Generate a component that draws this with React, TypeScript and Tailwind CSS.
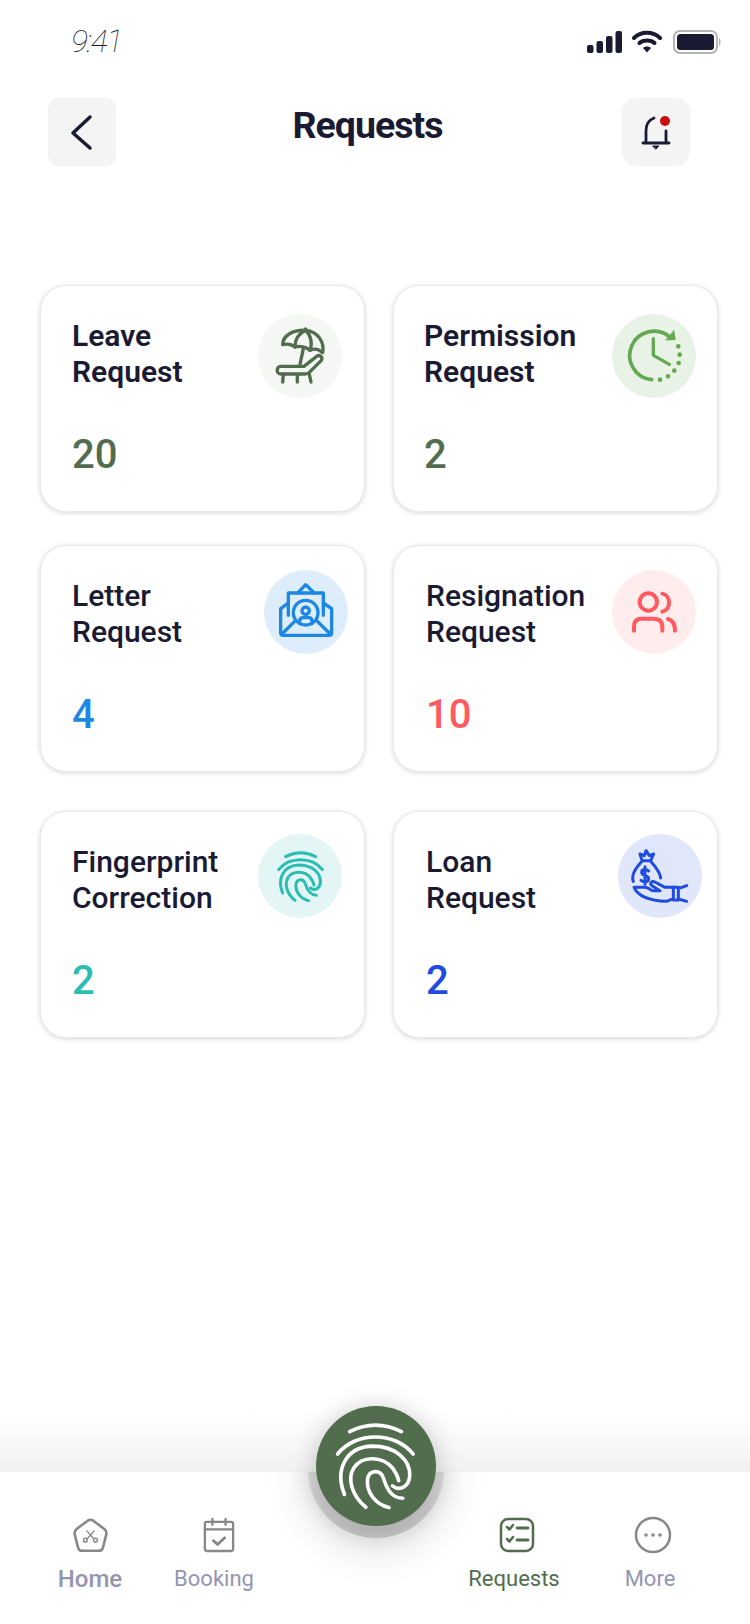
import type { ReactNode } from "react";

function FingerprintIcon({ className, strokeWidth }: { className: string; strokeWidth: number }) {
  return (
    <svg viewBox="100 85 240 255" className={className} fill="none" stroke="currentColor" strokeWidth={strokeWidth} strokeLinecap="round" strokeLinejoin="round">
      <path d="M148 113 Q223 75 298 113" />
      <path d="M113 178 C165 112 280 112 332 178" />
      <path d="M133 295 C105 225 135 157 215 155 C280 155 325 195 322 242 C320 270 295 288 272 270" />
      <path d="M195 332 C155 300 140 250 160 218 C185 180 245 185 272 218 C282 232 288 245 290 255" />
      <path d="M262 333 C225 325 195 290 200 250 C205 222 238 222 246 248 C256 280 270 306 302 306" />
    </svg>
  );
}

function IconBox({ children, stroke }: { children: ReactNode; stroke: string }) {
  return (
    <svg viewBox="0 0 180 180" className={`h-[60px] w-[60px] ${stroke}`} fill="none" stroke="currentColor" strokeWidth="10" strokeLinecap="round" strokeLinejoin="round">
      {children}
    </svg>
  );
}

const BeachIcon = () => (
  <IconBox stroke="text-[#526d4e]">
    <g transform="translate(-60 -77)">
      <path d="M98 133 C98 105 130 88 167 90 C203 93 224 125 218 157 C205 145 190 145 180 150 C170 140 150 135 135 140 C125 132 110 130 98 133 Z" />
      <path d="M167 86 V90 M167 90 C145 100 135 120 135 140 M167 90 C183 105 188 130 180 150" />
      <path d="M160 145 L149 197" />
      <path d="M92 198 H162 L200 168 C208 162 220 170 214 180 L178 216 C174 220 170 221 165 221 H92 C78 221 78 198 92 198 Z" />
      <path d="M100 222 L98 245 M142 222 V245 M178 222 L183 245" />
    </g>
  </IconBox>
);

const ClockIcon = () => (
  <IconBox stroke="text-[#64a950]">
    <g transform="translate(-72 -77)">
      <path d="M155 238 A73 73 0 1 1 212 112" strokeWidth="11" />
      <path d="M222 91 L226 118 L198 119 Z" fill="currentColor" strokeWidth="2" />
      <path d="M160 115 V165 L208 192" />
      <g strokeWidth="14">
        <path d="M235 138 h.01 M239 163 h.01 M236 188 h.01 M223 211 h.01 M204 228 h.01 M180 238 h.01" />
      </g>
    </g>
  </IconBox>
);

const LetterIcon = () => (
  <IconBox stroke="text-[#1d87e4]">
    <g transform="translate(-63 -65)">
      <path d="M77 145 V217 Q77 225 85 225 H222 Q230 225 230 217 V145 L205 128 M100 128 L77 145" />
      <path d="M100 165 V98 H205 V165" />
      <path d="M128 98 L152 73 L178 98" />
      <path d="M81 221 L122 180 M226 221 L184 180" />
      <circle cx="152" cy="157" r="37" fill="#deedfb" />
      <circle cx="152" cy="151" r="11" />
      <path d="M134 190 V182 Q134 172 145 172 H160 Q171 172 171 182 V190" />
    </g>
  </IconBox>
);

const PeopleIcon = () => (
  <IconBox stroke="text-[#ff5a5f]">
    <g transform="translate(-72 -65)" strokeWidth="12">
      <circle cx="145" cy="125" r="26" />
      <path d="M187 100 C214 106 214 148 187 154" />
      <path d="M102 211 V198 Q102 175 125 175 H160 Q187 175 187 200 V211" />
      <path d="M204 176 Q225 182 225 211" />
    </g>
  </IconBox>
);

const TealFingerprint = () => <FingerprintIcon className="h-[51px] w-[48px] text-[#2bbdb4]" strokeWidth={15} />;

const LoanIcon = () => (
  <IconBox stroke="text-[#1f4be0]">
    <g transform="translate(-60 -62)" strokeWidth="9">
      <path d="M90 86 L103 91 L108 76 L118 91 L131 86 L122 106 H96 Z" />
      <path d="M96 108 C78 128 62 148 70 168 M122 108 C135 122 150 138 152 158" />
      <path d="M116 137 C108 129 94 132 95 142 C96 153 116 149 116 160 C116 171 100 171 93 165 M105 124 V177" />
      <path d="M72 186 C85 215 120 226 170 228 L190 220 V186 H165 L135 170 C125 165 118 174 126 181 L150 196 H128 M72 186 H104 C112 186 118 190 126 196" />
      <path d="M190 186 H205 V224 H190 M205 190 L230 181 M205 221 L230 228" />
    </g>
  </IconBox>
);

type Req = {
  title: [string, string];
  count: number;
  icon: ReactNode;
  textLeft: string;
  circle: string;
  weight: string;
  numColor: string;
};

const rows: Req[][] = [
  [
    { title: ["Leave", "Request"], count: 20, icon: <BeachIcon />, textLeft: "ml-[31px]", circle: "mt-[28px] mr-[22px] bg-[#f5f7f4]", weight: "font-semibold", numColor: "text-[#526d4e]" },
    { title: ["Permission", "Request"], count: 2, icon: <ClockIcon />, textLeft: "ml-[30px]", circle: "mt-[28px] mr-[21px] bg-[#e9f2e6]", weight: "font-semibold", numColor: "text-[#526d4e]" },
  ],
  [
    { title: ["Letter", "Request"], count: 4, icon: <LetterIcon />, textLeft: "ml-[31px]", circle: "mt-[24px] mr-[16px] bg-[#deedfb]", weight: "font-medium", numColor: "text-[#1d87e4]" },
    { title: ["Resignation", "Request"], count: 10, icon: <PeopleIcon />, textLeft: "ml-[32px]", circle: "mt-[24px] mr-[21px] bg-[#ffeded]", weight: "font-medium", numColor: "text-[#ff5a5f]" },
  ],
  [
    { title: ["Fingerprint", "Correction"], count: 2, icon: <TealFingerprint />, textLeft: "ml-[31px]", circle: "mt-[22px] mr-[22px] bg-[#e3f6f5]", weight: "font-medium", numColor: "text-[#2bbdb4]" },
    { title: ["Loan", "Request"], count: 2, icon: <LoanIcon />, textLeft: "ml-[32px]", circle: "mt-[22px] mr-[15px] bg-[#e0e7fb]", weight: "font-medium", numColor: "text-[#1f4be0]" },
  ],
];

function RequestCard({ r }: { r: Req }) {
  return (
    <div className="h-[227px] w-[325px] rounded-[26px] border border-[#e9e9e9] bg-white shadow-[0_1px_5px_rgba(0,0,0,0.16)]">
      <div className="flex h-[145px] items-start justify-between">
        <div className={`mt-[32px] text-[30px] leading-[36px] text-[#1a1a33] ${r.textLeft} ${r.weight}`}>
          <div>{r.title[0]}</div>
          <div>{r.title[1]}</div>
        </div>
        <div className={`flex h-[84px] w-[84px] items-center justify-center rounded-full ${r.circle}`}>{r.icon}</div>
      </div>
      <div className={`text-[40px] leading-[48px] font-medium ${r.textLeft} ${r.numColor}`}>{r.count}</div>
    </div>
  );
}

function StatusBar() {
  return (
    <div className="flex h-[98px] items-start justify-between pt-[26px] pl-[71px] pr-[28px]">
      <span className="text-[32px] leading-[30px] font-thin italic tracking-[-1.5px] text-[#1a1a33]">9:41</span>
      <div className="flex items-center gap-[11px] pt-[4px]">
        <svg viewBox="0 0 36 22" className="mr-[-2px] h-[22px] w-[36px] fill-[#1a1a33]">
          <rect x="0" y="14" width="6.5" height="8" rx="2" />
          <rect x="9.5" y="10" width="6.5" height="12" rx="2" />
          <rect x="19" y="5" width="6.5" height="17" rx="2" />
          <rect x="28.5" y="0" width="6.5" height="22" rx="2" />
        </svg>
        <svg viewBox="0 0 30 24" className="h-[24px] w-[30px]" fill="none" stroke="#1a1a33" strokeWidth="4" strokeLinecap="round">
          <path d="M2 8 C9 1 21 1 28 8" />
          <path d="M7.5 13 C11 9.5 19 9.5 22.5 13" />
          <path d="M11 18 L15 22.5 L19 18 C17 16 13 16 11 18 Z" fill="#1a1a33" stroke="none" />
        </svg>
        <svg viewBox="0 0 49 24" className="h-[24px] w-[49px]">
          <rect x="1" y="1" width="43" height="22" rx="6" fill="none" stroke="#b3b3b8" strokeWidth="2" />
          <rect x="4" y="4" width="37" height="16" rx="3.5" fill="#1a1a33" />
          <path d="M46 8 C48 9 48 15 46 16 Z" fill="#b3b3b8" />
        </svg>
      </div>
    </div>
  );
}

function NavItem({ label, icon, width, labelClass, iconShift }: { label: string; icon: ReactNode; width: string; labelClass: string; iconShift: string }) {
  return (
    <div className={`flex flex-col items-center ${width}`}>
      <div className={`flex h-[44px] items-center justify-center ${iconShift}`}>{icon}</div>
      <span className={`mt-[7px] leading-[30px] ${labelClass}`}>{label}</span>
    </div>
  );
}

export default function App() {
  return (
    <div className="relative flex h-[1624px] w-[750px] flex-col overflow-hidden bg-white font-['Roboto',sans-serif]">
      <StatusBar />

      <div className="flex items-start justify-between pl-[48px] pr-[60px]">
        <button className="flex h-[68px] w-[68px] items-center justify-center rounded-[10px] bg-[#f4f4f5]">
          <svg viewBox="0 0 68 68" className="h-[68px] w-[68px]" fill="none" stroke="#1a1a33" strokeWidth="3.5" strokeLinecap="round" strokeLinejoin="round">
            <path d="M42 19 L25 35 L42 50" />
          </svg>
        </button>
        <h1 className="mr-[3px] text-[37.5px] leading-[54px] font-bold tracking-[-1px] text-[#1a1a33]">Requests</h1>
        <button className="flex h-[68px] w-[68px] items-center justify-center rounded-[14px] bg-[#f4f4f5]">
          <svg viewBox="0 0 68 68" className="h-[68px] w-[68px]" fill="none" stroke="#1a1a33" strokeWidth="2.8" strokeLinecap="round">
            <path d="M24 45 V33 C24 27 27 22 32 20 M44 45 V33 M21 45 H47" />
            <path d="M31 48 H37 L34 51 Z" fill="#1a1a33" strokeWidth="1" />
            <circle cx="43" cy="23" r="5" fill="#c90f0f" stroke="none" />
          </svg>
        </button>
      </div>

      <main className="flex-1 pt-[119px] pl-[40px]">
        {rows.map((row, i) => (
          <div key={i} className={`flex gap-[28px] ${i === 1 ? "mt-[33px]" : i === 2 ? "mt-[39px]" : ""}`}>
            {row.map((r) => (
              <RequestCard key={r.title.join(" ")} r={r} />
            ))}
          </div>
        ))}
      </main>

      <div className="h-[62px] bg-gradient-to-b from-white via-[#f9f9f9] to-[#f0f0f0]" />

      <nav className="relative flex h-[152px] items-start overflow-hidden bg-white pt-[41px] pl-[28px]">
        <div className="absolute top-[-70px] left-[308px] h-[136px] w-[136px] rounded-full bg-gradient-to-b from-[#f6f6f6] to-[#c2c2c2] shadow-[0_8px_44px_rgba(0,0,0,0.16)]" />
        <NavItem
          label="Home"
          width="w-[124px]"
          iconShift=""
          labelClass="text-[24px] font-medium text-[#9595b2]"
          icon={
            <svg viewBox="0 0 40 40" className="h-[37px] w-[37px]" fill="none" stroke="#888888" strokeLinecap="round" strokeLinejoin="round">
              <path d="M17 4 Q20 2 23 4 L35 13 Q38 15.500 37 19 L33.500 33 Q32.500 36.500 29 36.500 H11 Q7.500 36.500 6.500 33 L3 19 Q2 15.500 5 13 Z" strokeWidth="2.8" />
              <path d="M16 15 L23.500 23.500 M24 15 L16.500 23.500" strokeWidth="1.5" />
              <circle cx="14.500" cy="25" r="2" strokeWidth="1.5" />
              <circle cx="25.500" cy="25" r="2" strokeWidth="1.5" />
            </svg>
          }
        />
        <NavItem
          label="Booking"
          width="w-[124px]"
          iconShift="ml-[9px]"
          labelClass="text-[22px] text-[#9595b2]"
          icon={
            <svg viewBox="0 0 34 38" className="h-[36px] w-[32px]" fill="none" stroke="#888888" strokeWidth="2.500" strokeLinecap="round" strokeLinejoin="round">
              <rect x="2" y="5" width="30" height="31" rx="2" />
              <path d="M2 13 H32 M10 2 V8 M24 2 V8" />
              <path d="M11 25 L15.500 29 L23 22" strokeWidth="3" />
            </svg>
          }
        />
        <div className="w-[170px]" />
        <NavItem
          label="Requests"
          width="w-[136px]"
          iconShift="ml-[5px]"
          labelClass="text-[22px] text-[#526d4e]"
          icon={
            <svg viewBox="0 0 36 36" className="h-[36px] w-[36px]" fill="none" stroke="#526d4e" strokeWidth="2.500" strokeLinecap="round" strokeLinejoin="round">
              <rect x="2" y="2" width="32" height="32" rx="7" />
              <path d="M8 10 L10.500 12.500 L14 8 M8 22 L10.500 24.500 L14 20" />
              <path d="M18 11 H29 M18 23 H29" strokeWidth="2.800" />
            </svg>
          }
        />
        <NavItem
          label="More"
          width="w-[136px]"
          iconShift="ml-[5px]"
          labelClass="text-[22px] text-[#9595b2]"
          icon={
            <svg viewBox="0 0 38 38" className="h-[38px] w-[38px]" fill="none" stroke="#888888" strokeWidth="2.500">
              <circle cx="19" cy="19" r="17" />
              <circle cx="12" cy="19" r="1.800" fill="#888888" stroke="none" />
              <circle cx="19" cy="19" r="1.800" fill="#888888" stroke="none" />
              <circle cx="26" cy="19" r="1.800" fill="#888888" stroke="none" />
            </svg>
          }
        />
      </nav>

      <button className="absolute top-[1406px] left-[316px] flex h-[120px] w-[120px] items-center justify-center rounded-full bg-[#526d4e] shadow-[0_2px_26px_rgba(0,0,0,0.22)]">
        <FingerprintIcon className="mr-[3px] h-[88px] w-[83px] text-white" strokeWidth={10.5} />
      </button>
    </div>
  );
}
